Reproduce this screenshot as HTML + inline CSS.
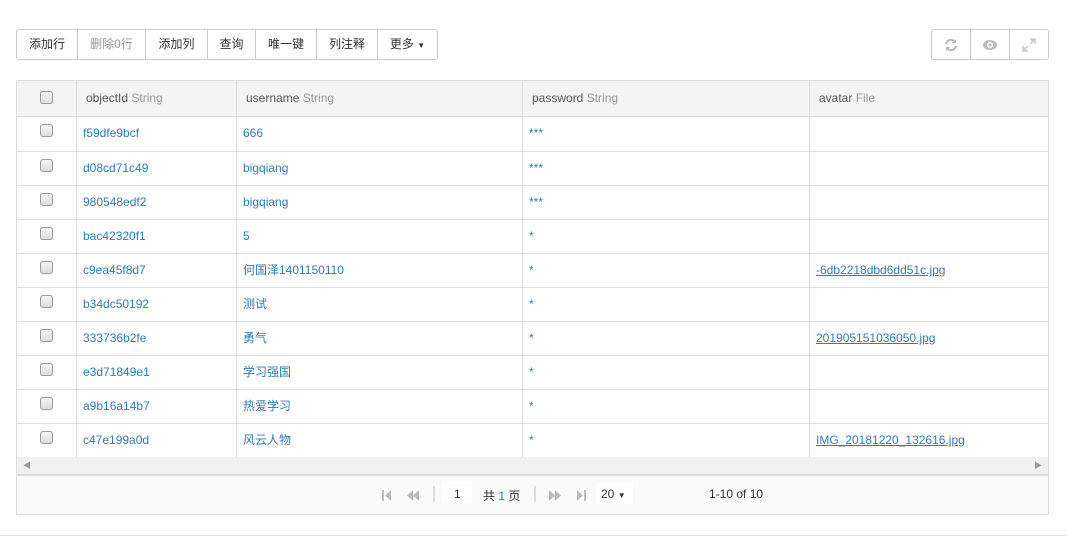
<!DOCTYPE html>
<html><head><meta charset="utf-8"><style>
*{box-sizing:border-box;margin:0;padding:0}
body{width:1067px;height:538px;background:#fff;font-family:"Liberation Sans","Noto Sans CJK SC",sans-serif;font-size:12px;color:#333;position:relative;overflow:hidden}
.tb{position:absolute;top:29px;left:16px;height:31px;border:1px solid #ccc;border-radius:3px;display:flex;background:#fff}
.tb div{height:29px;line-height:29px;text-align:center;border-right:1px solid #ccc;color:#333;font-size:12px}
.tb div:last-child{border-right:none}
.rb{position:absolute;top:29px;left:931px;width:118px;height:31px;border:1px solid #ccc;border-radius:3px;display:flex}
.rb div{flex:1;border-right:1px solid #ccc;display:flex;align-items:center;justify-content:center}
.rb div:last-child{border-right:none}
.tbl{position:absolute;left:16px;top:80px;width:1033px;border:1px solid #ddd;border-bottom:none}
.row{display:flex;border-bottom:1px solid #ddd;height:34px}
.row.h{background:#f4f4f4;height:36px}
.c{border-right:1px solid #ddd;line-height:33px;padding-left:6px;color:#337ab7;overflow:hidden;white-space:nowrap}
.h .c{line-height:35px;color:#555;padding-left:9px}
.h .c span{color:#999}
.row .c0{width:60px;position:relative;padding:0}
.cb{position:absolute;left:23px;top:7px;width:13px;height:13px;border:1px solid #999;border-radius:3px;background:linear-gradient(#f6f6f6,#ddd)}
.h .cb{top:10px}
.c1{width:160px}.c2{width:286px}.c3{width:287px}.c4{width:238px;border-right:none}
u{color:#337ab7}
.sb{position:absolute;left:16px;top:457px;width:1033px;height:18px;background:#f1f1f1;border:1px solid #ddd;border-top:none}
.pg{position:absolute;left:16px;top:475px;width:1033px;height:40px;background:#fafafa;border:1px solid #ddd}
</style></head><body>
<div class="tb">
<div style="width:61px">添加行</div><div style="width:68px;color:#999">删除0行</div><div style="width:62px">添加列</div><div style="width:48px">查询</div><div style="width:61px">唯一键</div><div style="width:61px">列注释</div><div style="width:59px">更多 <span style="font-size:8px">▼</span></div>
</div>
<div class="rb">
<div><svg width="14" height="14" viewBox="0 0 14 14"><path d="M2 6A5 5 0 0 1 11 4M12 8A5 5 0 0 1 3 10" stroke="#bbb" stroke-width="2" fill="none"/><path d="M12 1v4H8zM2 13V9h4z" fill="#bbb"/></svg></div>
<div><svg width="16" height="12" viewBox="0 0 16 12"><ellipse cx="8" cy="6" rx="7" ry="5" fill="#bbb"/><circle cx="8" cy="6" r="3" fill="#fff"/><circle cx="8" cy="6" r="1.5" fill="#bbb"/></svg></div>
<div><svg width="14" height="14" viewBox="0 0 14 14"><path d="M9 1h4v4zM1 13V9l4 4zM12 2L8 6M2 12l4-4" stroke="#ccc" stroke-width="1.5" fill="#ccc"/></svg></div>
</div>
<div class="tbl">
<div class="row h"><div class="c c0"><div class="cb"></div></div><div class="c c1">objectId <span>String</span></div><div class="c c2">username <span>String</span></div><div class="c c3">password <span>String</span></div><div class="c c4">avatar <span>File</span></div></div>
<div class="row" style="height:35px"><div class="c c0"><div class="cb"></div></div><div class="c c1">f59dfe9bcf</div><div class="c c2">666</div><div class="c c3">***</div><div class="c c4"></div></div>
<div class="row"><div class="c c0"><div class="cb"></div></div><div class="c c1">d08cd71c49</div><div class="c c2">bigqiang</div><div class="c c3">***</div><div class="c c4"></div></div>
<div class="row"><div class="c c0"><div class="cb"></div></div><div class="c c1">980548edf2</div><div class="c c2">bigqiang</div><div class="c c3">***</div><div class="c c4"></div></div>
<div class="row"><div class="c c0"><div class="cb"></div></div><div class="c c1">bac42320f1</div><div class="c c2">5</div><div class="c c3">*</div><div class="c c4"></div></div>
<div class="row"><div class="c c0"><div class="cb"></div></div><div class="c c1">c9ea45f8d7</div><div class="c c2">何国泽1401150110</div><div class="c c3">*</div><div class="c c4"><u>-6db2218dbd6dd51c.jpg</u></div></div>
<div class="row"><div class="c c0"><div class="cb"></div></div><div class="c c1">b34dc50192</div><div class="c c2">测试</div><div class="c c3">*</div><div class="c c4"></div></div>
<div class="row"><div class="c c0"><div class="cb"></div></div><div class="c c1">333736b2fe</div><div class="c c2">勇气</div><div class="c c3">*</div><div class="c c4"><u>201905151036050.jpg</u></div></div>
<div class="row"><div class="c c0"><div class="cb"></div></div><div class="c c1">e3d71849e1</div><div class="c c2">学习强国</div><div class="c c3">*</div><div class="c c4"></div></div>
<div class="row"><div class="c c0"><div class="cb"></div></div><div class="c c1">a9b16a14b7</div><div class="c c2">热爱学习</div><div class="c c3">*</div><div class="c c4"></div></div>
<div class="row"><div class="c c0"><div class="cb"></div></div><div class="c c1">c47e199a0d</div><div class="c c2">风云人物</div><div class="c c3">*</div><div class="c c4"><u>IMG_20181220_132616.jpg</u></div></div>
</div>
<div class="sb"><span style="position:absolute;left:6px;top:3px;font-size:8px;color:#999">◀</span><span style="position:absolute;right:6px;top:3px;font-size:8px;color:#999">▶</span></div>
<div class="pg">
<svg style="position:absolute;left:365px;top:14px" width="10" height="11"><rect x="0" y="0" width="2" height="11" fill="#bbb"/><path d="M9 0V11L3 5.5z" fill="#bbb"/></svg>
<svg style="position:absolute;left:390px;top:14px" width="13" height="11"><path d="M6 0V11L0 5.5zM12 0V11L6 5.5z" fill="#bbb"/></svg>
<span style="position:absolute;left:416px;top:10px;width:2px;height:16px;background:#ddd"></span>
<span style="position:absolute;left:425px;top:5px;width:30px;height:22px;background:#fff"></span>
<span style="position:absolute;left:437px;top:11px;color:#333">1</span>
<span style="position:absolute;left:466px;top:11px;color:#333">共 <span style="color:#337ab7">1</span> 页</span>
<span style="position:absolute;left:517px;top:10px;width:2px;height:16px;background:#ddd"></span>
<svg style="position:absolute;left:532px;top:14px" width="13" height="11"><path d="M0 0V11L6 5.5zM6 0V11L12 5.5z" fill="#bbb"/></svg>
<svg style="position:absolute;left:560px;top:14px" width="10" height="11"><path d="M0 0V11L6 5.5z" fill="#bbb"/><rect x="7" y="0" width="2" height="11" fill="#bbb"/></svg>
<span style="position:absolute;left:579px;top:6px;width:37px;height:22px;background:#fff"></span>
<span style="position:absolute;left:584px;top:11px;color:#333">20 <span style="font-size:8px">▼</span></span>
<span style="position:absolute;left:692px;top:11px;color:#333">1-10 of 10</span>
</div>
<div style="position:absolute;left:0;top:535px;width:1067px;height:1px;background:#ddd"></div>
</body></html>
